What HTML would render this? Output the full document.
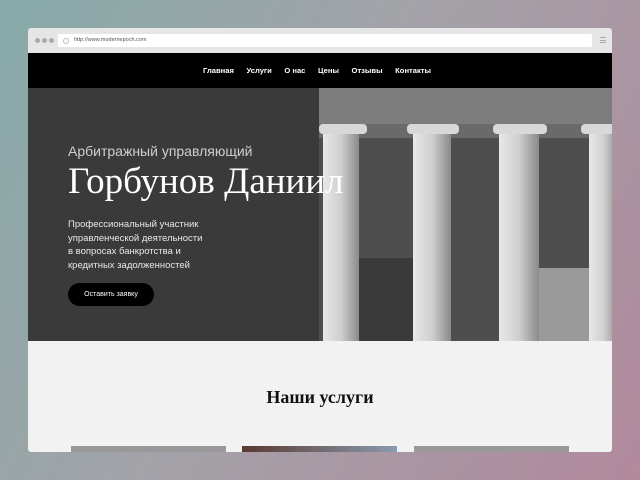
<!DOCTYPE html>
<html><head><meta charset="utf-8"><style>
*{margin:0;padding:0;box-sizing:border-box}
body{width:640px;height:480px;overflow:hidden;background:linear-gradient(120deg,#86aaa8 0%,#a3a3a8 45%,#b1899c 100%);font-family:"Liberation Sans",sans-serif;position:relative}
.win{position:absolute;left:28px;top:28px;width:584px;height:424px;background:#f2f2f2;overflow:hidden;border-radius:3px}
.tb{height:25px;background:#e6e6e6;position:relative}
.dots{position:absolute;left:7px;top:10px;width:24px;white-space:nowrap;font-size:0}
.dots i{display:inline-block;width:5px;height:5px;border-radius:50%;background:#aaa;margin-right:2px}
.url{position:absolute;left:30px;top:6px;width:534px;height:13px;background:#fff;border-radius:2px;font-size:5.5px;color:#555;line-height:13px;padding-left:16px}
.url:before{content:"";position:absolute;left:5px;top:4px;width:4px;height:4px;border:1px solid #bbb;border-radius:50%}
.ham{position:absolute;right:6px;top:9px;width:6px;height:6px;border-top:1px solid #aaa;border-bottom:1px solid #aaa}
.ham:after{content:"";position:absolute;left:0;top:1.5px;width:6px;border-top:1px solid #aaa}
.nav{height:35px;background:#000;text-align:center;color:#fff;font-size:7.6px;font-weight:bold;line-height:36px;padding-right:6px}
.nav span{margin:0 6.3px}
.hero{position:relative;height:253px;background:#3a3a3a}
.img{position:absolute;left:291px;top:0;width:293px;height:253px;background:#6a6a6a}
.h1{position:absolute;left:40px;top:55px;color:#cfcfcf;font-size:14px}
.h2{position:absolute;left:40px;top:72px;color:#fff;font-size:37px;font-family:"Liberation Serif",serif;white-space:nowrap}
.p{position:absolute;left:40px;top:130px;color:#e8e8e8;font-size:9.5px;line-height:13.5px}
.btn{position:absolute;left:40px;top:195px;width:86px;height:23px;border-radius:12px;background:#000;color:#fff;font-size:7px;line-height:23px;text-align:center}
.sec{text-align:center;font-family:"Liberation Serif",serif;font-weight:bold;font-size:18px;color:#111;position:absolute;top:359px;left:0;width:584px}
.card{position:absolute;top:418px;width:155px;height:10px}
</style></head><body>
<div class="win">
<div class="tb"><div class="dots"><i></i><i></i><i></i></div><div class="url">http://www.modernepoch.com</div><div class="ham"></div></div>
<div class="nav"><span>Главная</span><span>Услуги</span><span>О нас</span><span>Цены</span><span>Отзывы</span><span>Контакты</span></div>
<div class="hero">
<div class="img">
<svg width="293" height="253" style="position:absolute;left:0;top:0">
<defs><linearGradient id="c" x1="0" x2="1"><stop offset="0" stop-color="#e8e8e8"/><stop offset="0.5" stop-color="#cfcfcf"/><stop offset="1" stop-color="#8a8a8a"/></linearGradient></defs>
<rect x="0" y="0" width="293" height="36" fill="#7d7d7d"/>
<rect x="0" y="50" width="293" height="203" fill="#4e4e4e"/>
<rect x="40" y="170" width="60" height="83" fill="#3a3a3a"/>
<rect x="200" y="180" width="80" height="73" fill="#9a9a9a"/>
<g fill="url(#c)">
<rect x="4" y="44" width="36" height="209"/>
<rect x="94" y="44" width="38" height="209"/>
<rect x="180" y="44" width="40" height="209"/>
<rect x="270" y="44" width="30" height="209"/>
</g>
<g fill="#d8d8d8">
<rect x="0" y="36" width="48" height="10" rx="4"/>
<rect x="88" y="36" width="52" height="10" rx="4"/>
<rect x="174" y="36" width="54" height="10" rx="4"/>
<rect x="262" y="36" width="40" height="10" rx="4"/>
</g>
</svg></div>
<div class="h1">Арбитражный управляющий</div>
<div class="h2">Горбунов Даниил</div>
<div class="p">Профессиональный участник<br>управленческой деятельности<br>в вопросах банкротства и<br>кредитных задолженностей</div>
<div class="btn">Оставить заявку</div>
</div>
<div class="sec">Наши услуги</div>
<div class="card" style="left:43px;background:#999"></div>
<div class="card" style="left:214px;background:linear-gradient(90deg,#5a3a30,#8a9ab0)"></div>
<div class="card" style="left:386px;background:#999"></div>
</div>
</body></html>
